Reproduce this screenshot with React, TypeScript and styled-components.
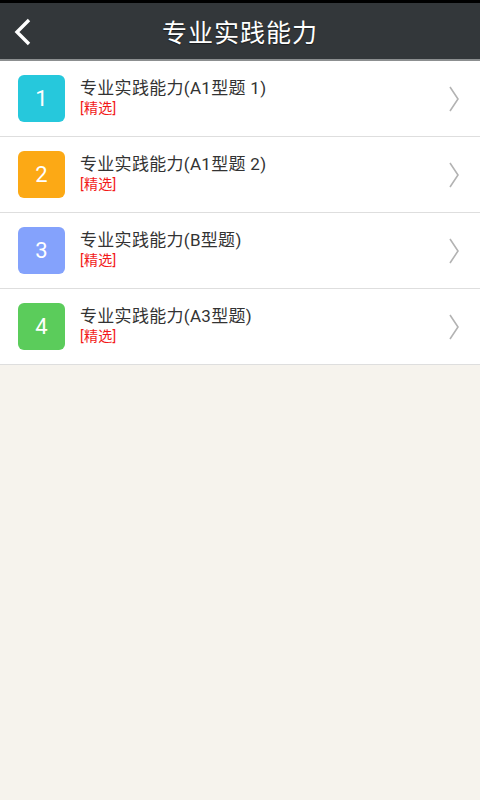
import React from 'react'
import styled, { createGlobalStyle } from 'styled-components'

const items = [
  { id: 1, title: '专业实践能力(A1型题 1)', color: '#26c8dc' },
  { id: 2, title: '专业实践能力(A1型题 2)', color: '#fca915' },
  { id: 3, title: '专业实践能力(B型题)', color: '#84a2fc' },
  { id: 4, title: '专业实践能力(A3型题)', color: '#5bcc5b' }
]

const GlobalStyle = createGlobalStyle`
  body {
    margin: 0;
    background: #f6f3ed;
    font-family: Roboto, "Noto Sans CJK SC", sans-serif;
  }
`

export default function App() {
  return (
    <Page>
      <GlobalStyle />
      <StatusBar />
      <Header>
        <BackButton>
          <svg width="22" height="30" viewBox="0 0 22 30">
            <path d="M17 3 L5 15 L17 27" fill="none" stroke="#fff" strokeWidth="3.4" />
          </svg>
        </BackButton>
        <Title>专业实践能力</Title>
      </Header>
      <List>
        {items.map(({ id, title, color }) => (
          <Row key={id}>
            <Badge color={color}>{id}</Badge>
            <Info>
              <ItemTitle>{title}</ItemTitle>
              <Tag>[精选]</Tag>
            </Info>
            <Arrow width="12" height="26" viewBox="0 0 12 26">
              <path d="M2 1 L10 13 L2 25" fill="none" stroke="#b3b3b3" strokeWidth="1.6" />
            </Arrow>
          </Row>
        ))}
      </List>
    </Page>
  )
}

const Page = styled.div`
  width: 480px;
  min-height: 800px;
  background: #f6f3ed;
`

const StatusBar = styled.div`
  height: 3px;
  background: #000;
`

const Header = styled.div`
  position: relative;
  height: 56px;
  background: #33373a;
  border-bottom: 2px solid #8c8f90;
  display: flex;
  align-items: center;
  justify-content: center;
`

const BackButton = styled.div`
  position: absolute;
  left: 12px;
  top: 14px;
  display: flex;
`

const Title = styled.div`
  color: #fff;
  font-size: 25px;
  letter-spacing: 1px;
  font-family: "Noto Sans CJK SC", sans-serif;
  text-shadow: 0 1px 1px rgba(0, 0, 0, 0.5);
`

const List = styled.div`
  background: #fff;
`

const Row = styled.div`
  height: 75px;
  display: flex;
  align-items: center;
  padding: 0 18px;
  border-bottom: 1px solid #dedede;
`

const Badge = styled.div<{ color: string }>`
  width: 47px;
  height: 47px;
  border-radius: 6px;
  background: ${({ color }) => color};
  color: #fff;
  font-size: 22px;
  display: flex;
  align-items: center;
  justify-content: center;
  margin-top: -1px;
`

const Info = styled.div`
  flex: 1;
  display: flex;
  flex-direction: column;
  padding-left: 15px;
  margin-top: -4px;
`

const ItemTitle = styled.div`
  font-size: 17px;
  line-height: 22px;
  letter-spacing: 0.3px;
  color: #333;
`

const Tag = styled.div`
  font-size: 14px;
  line-height: 18px;
  letter-spacing: 0.3px;
  color: #f21a1a;
`

const Arrow = styled.svg`
  margin-right: 2px;
`
